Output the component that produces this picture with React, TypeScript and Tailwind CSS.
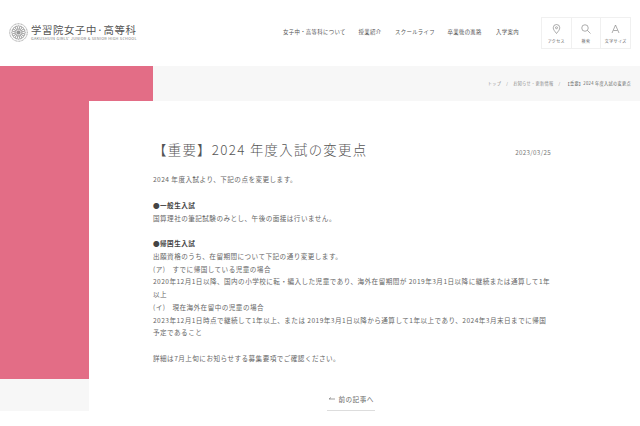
import React from "react";

const jp = { fontFamily: '"Noto Sans CJK JP", "Noto Sans", sans-serif' };

const nav = [
  { t: "女子中・高等科について", c: "w-[63px]" },
  { t: "授業紹介", c: "w-[24px]" },
  { t: "スクールライフ", c: "w-[40px]" },
  { t: "卒業後の進路", c: "w-[36px]" },
  { t: "入学案内", c: "w-[24px]" },
];

function Crest() {
  const spokes = Array.from({ length: 16 }, (_, i) => (i * 360) / 16);
  return (
    <svg width="19" height="19" viewBox="0 0 38 38" className="shrink-0">
      <circle cx="19" cy="19" r="17.5" fill="none" stroke="#888" strokeWidth="1.6" strokeDasharray="2 1" />
      <circle cx="19" cy="19" r="13.5" fill="none" stroke="#aaa" strokeWidth="1" />
      {spokes.map((a) => (
        <ellipse key={a} cx="19" cy="9.5" rx="2" ry="4.2" fill="none" stroke="#888" strokeWidth="1" transform={`rotate(${a} 19 19)`} />
      ))}
      <circle cx="19" cy="19" r="4" fill="#999" />
    </svg>
  );
}

function ToolBox({ label, children, last }: { label: string; children: React.ReactNode; last?: boolean }) {
  return (
    <div className={`flex-1 h-full flex flex-col items-center pt-[4px] ${last ? "" : "border-r border-[#f0f0f0]"}`}>
      <div className="h-[14px] flex items-center justify-center">{children}</div>
      <div className="text-[4px] leading-[8px] tracking-[0.4px] text-[#666] whitespace-nowrap mt-[1px]">{label}</div>
    </div>
  );
}

function Header() {
  return (
    <header className="h-[66px] bg-white flex items-center pl-[9px] pr-[9px] pb-[1px]">
      <div className="flex items-center gap-[3px] w-[129px]">
        <Crest />
        <div className="flex flex-col">
          <div className="text-[10.4px] leading-[12px] tracking-[0.62px] text-[#555] whitespace-nowrap">学習院女子中·高等科</div>
          <div className="text-[3.8px] leading-[5px] tracking-[0.3px] text-[#777] whitespace-nowrap">GAKUSHUIN GIRLS' JUNIOR &amp; SENIOR HIGH SCHOOL</div>
        </div>
      </div>
      <nav className="ml-auto flex items-center gap-[12.5px] text-[5.4px] tracking-[0.32px] text-[#555]">
        {nav.map((n) => (
          <span key={n.t} className={`${n.c} whitespace-nowrap`}>{n.t}</span>
        ))}
      </nav>
      <div className="ml-[21px] flex h-[32px] w-[90px] border border-[#f0f0f0]">
        <ToolBox label="アクセス">
          <svg width="9" height="10" viewBox="0 0 18 20" fill="none" stroke="#777" strokeWidth="1.2">
            <path d="M9 19C5 14 2.500 11 2.500 7.500a6.500 6.500 0 0 1 13 0C15.500 11 13 14 9 19Z" />
            <circle cx="9" cy="7.500" r="2" />
          </svg>
        </ToolBox>
        <ToolBox label="検索">
          <svg width="10" height="10" viewBox="0 0 20 20" fill="none" stroke="#777" strokeWidth="1.2">
            <circle cx="8" cy="8" r="6.500" />
            <path d="M13 13l6 6" />
          </svg>
        </ToolBox>
        <ToolBox label="文字サイズ" last>
          <svg width="9" height="10" viewBox="0 0 18 20" fill="none" stroke="#777" strokeWidth="1.2">
            <path d="M2 18 9 2l7 16M5 13h8" />
          </svg>
        </ToolBox>
      </div>
    </header>
  );
}

function Crumbs() {
  return (
    <div className="flex-1 bg-[#f7f7f7] flex items-center justify-end pr-[9px] text-[4.2px] tracking-[0.3px] text-[#888] whitespace-nowrap">
      <span>トップ</span>
      <span className="mx-[5px]">/</span>
      <span>お知らせ・更新情報</span>
      <span className="mx-[5px]">/</span>
      <span className="text-[#666]">【重要】2024 年度入試の変更点</span>
    </div>
  );
}

function Article() {
  return (
    <article className="flex-1 bg-white pl-[64px] pr-[89px] pt-[37px] h-[310px] flex flex-col">
      <div className="flex items-end justify-between">
        <h1 className="text-[13.4px] leading-[22px] tracking-[1.3px] text-[#555] font-light whitespace-nowrap">【重要】2024 年度入試の変更点</h1>
        <div className="text-[6.2px] leading-[10px] tracking-[0.35px] text-[#777] mb-[2px]">2023/03/25</div>
      </div>
      <div className="mt-[13.3px] text-[6.6px] leading-[12.75px] tracking-[0.45px] text-[#666]">
        <p>2024 年度入試より、下記の点を変更します。</p>
        <p className="mt-[12.75px] font-bold text-[#444]">●一般生入試</p>
        <p>国算理社の筆記試験のみとし、午後の面接は行いません。</p>
        <p className="mt-[12.75px] font-bold text-[#444]">●帰国生入試</p>
        <p>出願資格のうち、在留期間について下記の通り変更します。</p>
        <p>(ア)　すでに帰国している児童の場合</p>
        <p>2020年12月1日以降、国内の小学校に転・編入した児童であり、海外在留期間が 2019年3月1日以降に継続または通算して1年以上</p>
        <p>(イ)　現在海外在留中の児童の場合</p>
        <p>2023年12月1日時点で継続して1年以上、または 2019年3月1日以降から通算して1年以上であり、2024年3月末日までに帰国予定であること</p>
        <p className="mt-[12.75px]">詳細は7月上旬にお知らせする募集要項でご確認ください。</p>
      </div>
      <div className="mt-[28px] self-center w-[48px] h-[19px] border-b border-[#ddd] flex items-start gap-[4px] pl-[2px] text-[6.6px] leading-[12px] tracking-[0.45px] text-[#666] whitespace-nowrap ml-[-3px]">
        <svg width="6" height="12" viewBox="0 0 6 12" fill="none" stroke="#777" strokeWidth="0.7" className="shrink-0">
          <path d="M0 6h6M0 6l2-1.500" />
        </svg>
        <span>前の記事へ</span>
      </div>
    </article>
  );
}

export default function App() {
  return (
    <div className="w-[640px] h-[426px] overflow-hidden bg-white" style={jp}>
      <Header />
      <div className="flex h-[35px]">
        <div className="w-[153px] bg-[#e36d86]" />
        <Crumbs />
      </div>
      <div className="flex">
        <div className="w-[89px] shrink-0 flex flex-col">
          <div className="h-[278px] bg-[#e36d86]" />
          <div className="h-[32px] bg-[#f7f7f7]" />
        </div>
        <Article />
      </div>
    </div>
  );
}
